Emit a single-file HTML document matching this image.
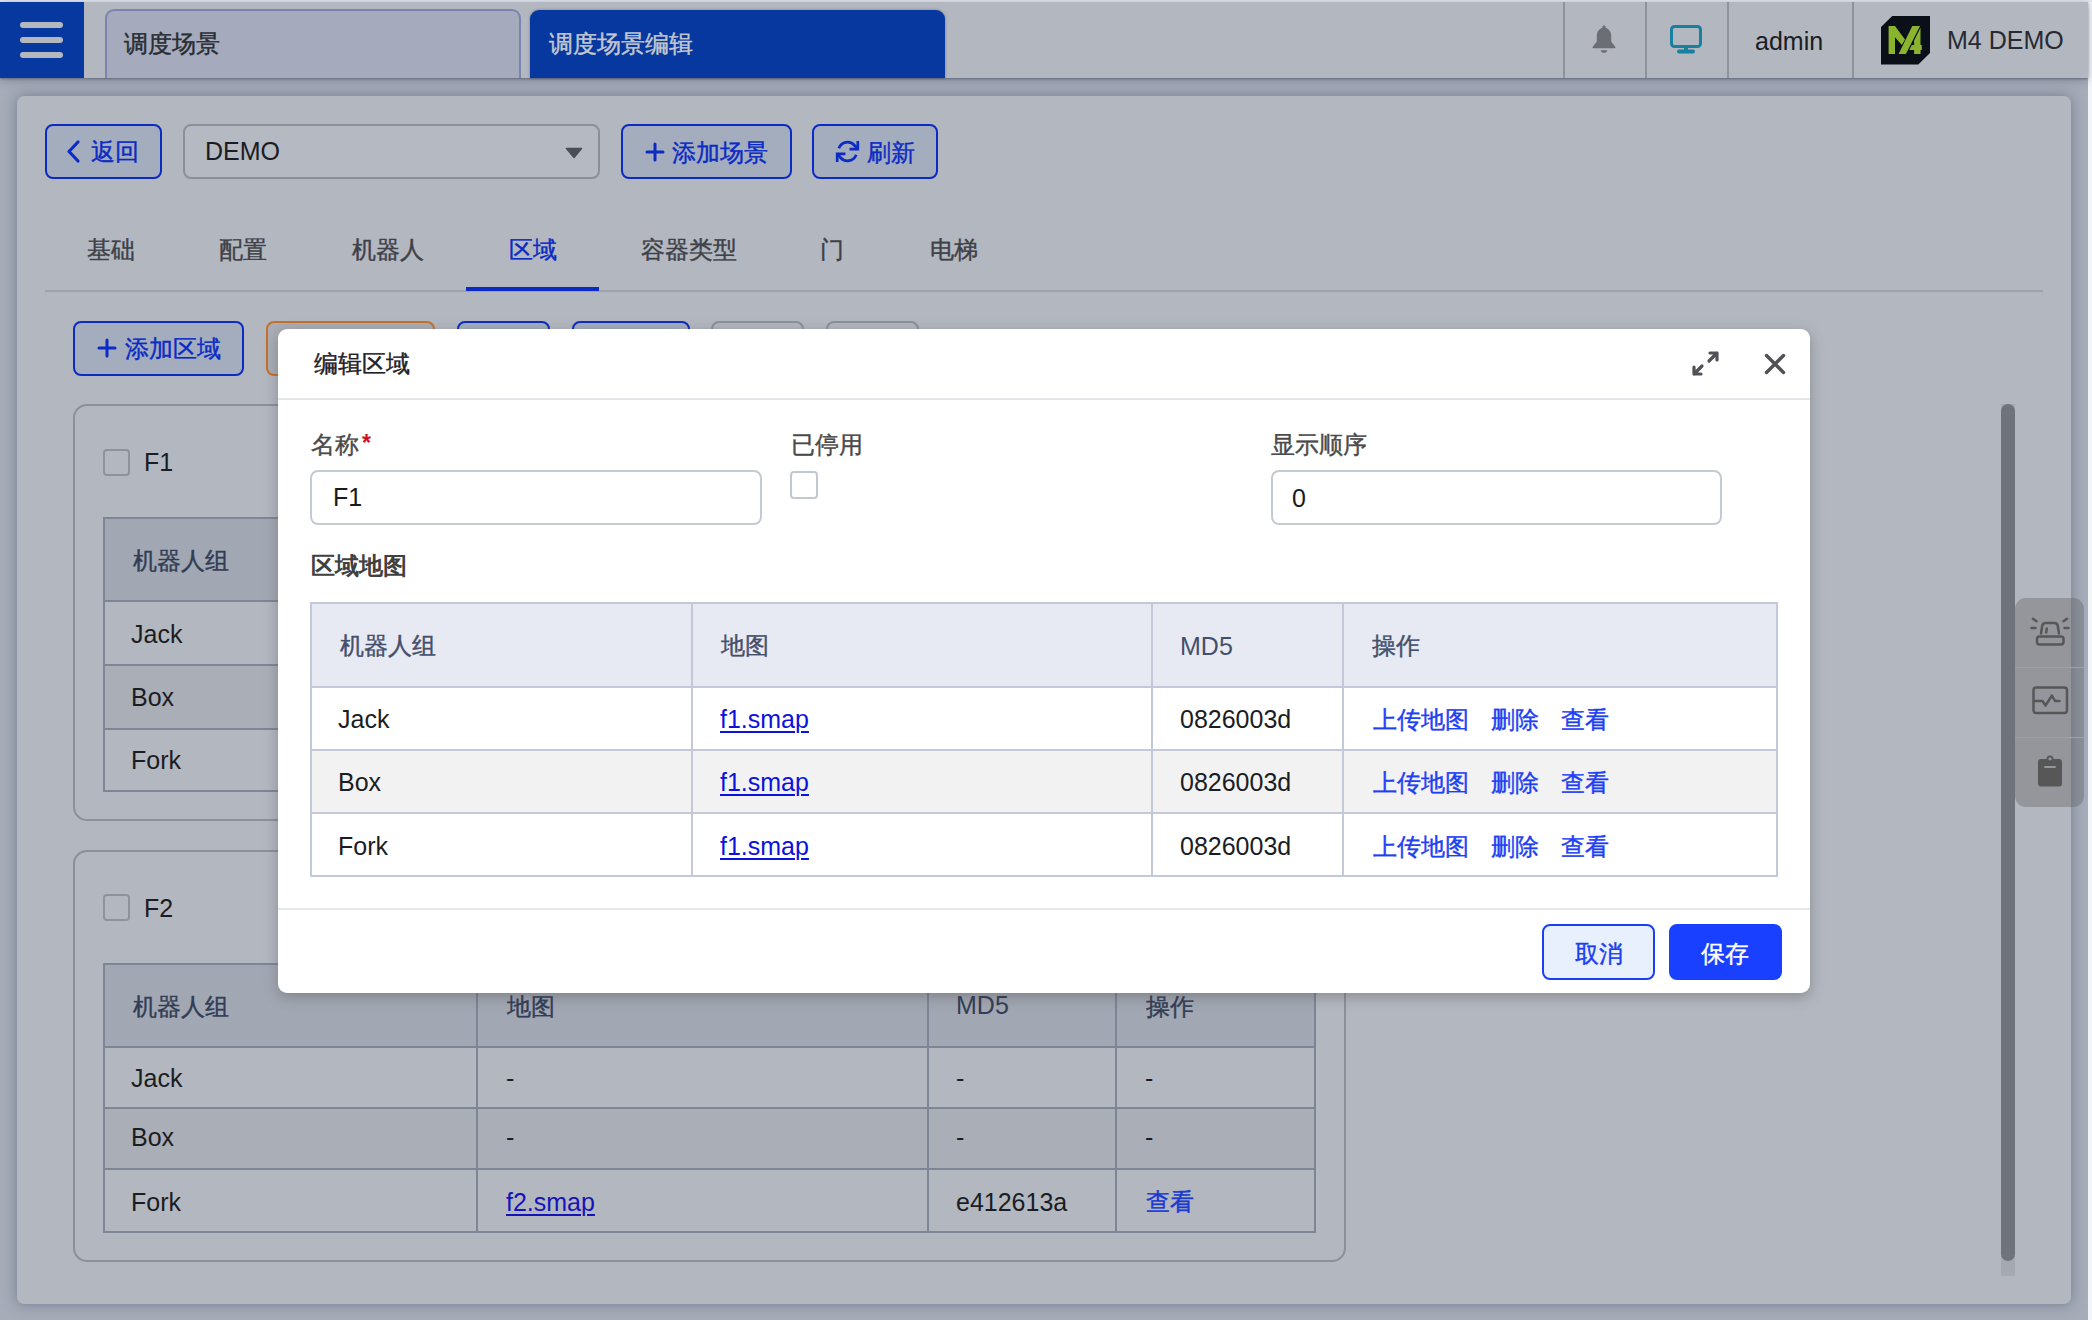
<!DOCTYPE html>
<html><head><meta charset="utf-8">
<style>
*{box-sizing:border-box;margin:0;padding:0}
html,body{width:2092px;height:1320px;overflow:hidden}
body{position:relative;background:#f4f5f9;font-family:"Liberation Sans",sans-serif;font-size:24px;color:#1a1d24}
.a{position:absolute}
.t{position:absolute;line-height:30px;white-space:nowrap;font-size:24px;-webkit-text-stroke-width:0.4px}
.t.l{-webkit-text-stroke-width:0}
.l{font-size:25px}
/* header */
#topstrip{left:0;top:0;width:2092px;height:2px;background:#e4e8f0}
#header{left:0;top:2px;width:2088px;height:76px;background:#b3b7bf;box-shadow:0 1px 2px rgba(50,60,85,.45),0 2px 9px rgba(50,60,85,.35)}
#page{left:0;top:78px;width:2088px;height:1242px;background:#a6acb8}
#burger{left:0;top:2px;width:84px;height:76px;background:#0638a0}
.bar{position:absolute;left:20px;width:43px;height:6px;border-radius:3px;background:#b3b7bf}
.htab{position:absolute;top:9px;height:69px;border-radius:9px 9px 0 0}
.sep{position:absolute;top:2px;width:2px;height:76px;background:#8e939b}
/* card */
#card{left:17px;top:96px;width:2054px;height:1208px;background:#b3b7bf;border-radius:7px;box-shadow:0 0 14px rgba(60,75,105,.5)}
.obtn{position:absolute;height:55px;border:2px solid #0b2bc4;border-radius:8px;background:#a3adbd}
.blue{color:#0b2bc4}
.zc{position:absolute;border:2px solid #8c9098;border-radius:14px}
.cb{position:absolute;width:27px;height:27px;border:2px solid #8e939b;border-radius:4px}
.tbl{position:absolute;border:2px solid #7e8595}
.hl{position:absolute;height:2px;background:#7e8595}
.vl{position:absolute;width:2px;background:#7e8595}
/* modal */
#modal{left:278px;top:329px;width:1532px;height:664px;background:#fff;border-radius:9px;box-shadow:0 4px 14px rgba(70,70,72,.38)}
.lab{color:#4a4a4a}
.inp{position:absolute;height:55px;border:2px solid #c6cad3;border-radius:8px;background:#fff}
.mhl{position:absolute;height:2px;background:#c5c8d8}
.mvl{position:absolute;width:2px;background:#c5c8d8}
.lnk{color:#0b12dd;text-decoration:underline;text-decoration-thickness:2px;text-underline-offset:3px}
.op{color:#1e40f5}
</style></head><body>
<div id="topstrip" class="a"></div>
<div id="page" class="a"></div>
<div id="header" class="a"></div>
<div id="burger" class="a">
  <div class="bar" style="top:20px"></div>
  <div class="bar" style="top:35px"></div>
  <div class="bar" style="top:50px"></div>
</div>
<div class="htab" style="left:105px;width:416px;background:#a5abbd;border:2px solid #7a84ae;border-bottom:none"></div>
<div class="t" style="left:124px;top:29px;color:#2a2d33">调度场景</div>
<div class="htab" style="left:530px;top:10px;height:68px;width:415px;background:#0638a0;box-shadow:0 0 3px rgba(20,30,80,.4)"></div>
<div class="t" style="left:549px;top:29px;color:#c3c7cf">调度场景编辑</div>

<div class="sep" style="left:1563px"></div>
<div class="sep" style="left:1645px"></div>
<div class="sep" style="left:1727px"></div>
<div class="sep" style="left:1852px"></div>
<!-- bell -->
<svg class="a" style="left:1588px;top:23px" width="32" height="32" viewBox="0 0 32 32">
  <path d="M16 2.5c1 0 1.6.7 1.6 1.6v.6c3.4 1 5.6 4.2 5.6 8.1v5.8l4.2 5.4v1.3H4.6v-1.3l4.2-5.4v-5.8c0-3.9 2.2-7.1 5.6-8.1v-.6c0-.9.6-1.6 1.6-1.6z" fill="#6b6e75"/>
  <path d="M12.6 27.2h6.8c-.5 1.6-1.8 2.6-3.4 2.6s-2.9-1-3.4-2.6z" fill="#6b6e75"/>
</svg>
<!-- monitor -->
<svg class="a" style="left:1668px;top:23px" width="36" height="32" viewBox="0 0 36 32">
  <rect x="3.5" x2="0" y="3.5" width="29" height="20" rx="3" fill="none" stroke="#1a80a0" stroke-width="3"/>
  <rect x="16" y="23" width="4" height="5" fill="#1a80a0"/>
  <rect x="9" y="26.5" width="18" height="4" rx="2" fill="#1a80a0"/>
</svg>
<div class="t l" style="left:1755px;top:26px;color:#1a1d24">admin</div>
<!-- logo -->
<svg class="a" style="left:1881px;top:16px" width="49" height="49" viewBox="0 0 49 49">
  <path d="M11.2 0H49V37L37.3 48.5H0V11Z" fill="#0a0f18"/>
  <g fill="#8bb42e">
    <path d="M7.6 10.1H14L24 23.5 20.8 29 14 21.3V38.1H7.6Z"/>
    <path d="M17.6 38.1H24.9L39 10.1H31.3Z"/>
    <path d="M39.5 11.7V29H40.8V34H39.5V38.1H33.1V34H28.3L30.8 29H33.1V24.4Z"/>
  </g>
</svg>
<div class="t l" style="left:1947px;top:25px;color:#262a33">M4 DEMO</div>

<!-- main card -->
<div id="card" class="a"></div>
<div class="obtn" style="left:45px;top:124px;width:117px"></div>
<svg class="a" style="left:64px;top:139px" width="20" height="26" viewBox="0 0 20 26"><path d="M14 3L5 12.5 14 22" fill="none" stroke="#0b2bc4" stroke-width="3.2" stroke-linecap="round" stroke-linejoin="round"/></svg>
<div class="t blue" style="left:91px;top:137px">返回</div>
<div class="a" style="left:183px;top:124px;width:417px;height:55px;border:2px solid #8a9099;border-radius:8px;background:#b5b9c1"></div>
<div class="t l" style="left:205px;top:136px;color:#1a1d24">DEMO</div>
<svg class="a" style="left:565px;top:147px" width="18" height="12" viewBox="0 0 18 12"><path d="M1.5 1.5h15L9 10.5z" fill="#4a4f57" stroke="#4a4f57" stroke-width="1.5" stroke-linejoin="round"/></svg>
<div class="obtn" style="left:621px;top:124px;width:171px"></div>
<svg class="a" style="left:643px;top:141px" width="24" height="22" viewBox="0 0 24 22"><path d="M12 3v16M4 11h16" stroke="#0b2bc4" stroke-width="3" stroke-linecap="round"/></svg>
<div class="t blue" style="left:672px;top:138px">添加场景</div>
<div class="obtn" style="left:812px;top:124px;width:126px"></div>
<svg class="a" style="left:834px;top:139px" width="27" height="26" viewBox="0 0 27 26">
  <path d="M4.8 9.3A9.3 9.3 0 0 1 20.6 6.5L23.5 9.6" fill="none" stroke="#0b2bc4" stroke-width="2.7"/>
  <path d="M23.8 3.3v6.9h-6.9" fill="none" stroke="#0b2bc4" stroke-width="2.7" stroke-linecap="square"/>
  <path d="M22.2 15.7A9.3 9.3 0 0 1 6.4 18.5L3.5 15.4" fill="none" stroke="#0b2bc4" stroke-width="2.7"/>
  <path d="M3.2 21.7v-6.9h6.9" fill="none" stroke="#0b2bc4" stroke-width="2.7" stroke-linecap="square"/>
</svg>
<div class="t blue" style="left:867px;top:138px">刷新</div>

<!-- tabs -->
<div class="t" style="left:87px;top:235px;color:#3e4148">基础</div>
<div class="t" style="left:219px;top:235px;color:#3e4148">配置</div>
<div class="t" style="left:352px;top:235px;color:#3e4148">机器人</div>
<div class="t blue" style="left:509px;top:235px">区域</div>
<div class="t" style="left:641px;top:235px;color:#3e4148">容器类型</div>
<div class="t" style="left:820px;top:235px;color:#3e4148">门</div>
<div class="t" style="left:930px;top:235px;color:#3e4148">电梯</div>
<div class="a" style="left:45px;top:290px;width:1998px;height:2px;background:#9ea3ab"></div>
<div class="a" style="left:466px;top:287px;width:133px;height:4px;background:#0b2bc4"></div>

<!-- sub toolbar -->
<div class="obtn" style="left:73px;top:321px;width:171px"></div>
<svg class="a" style="left:95px;top:337px" width="24" height="22" viewBox="0 0 24 22"><path d="M12 3v16M4 11h16" stroke="#0b2bc4" stroke-width="3" stroke-linecap="round"/></svg>
<div class="t blue" style="left:125px;top:334px">添加区域</div>
<div class="obtn" style="left:266px;top:321px;width:169px;border-color:#c8702a;background:#a9adb5"></div>
<div class="obtn" style="left:457px;top:321px;width:93px"></div>
<div class="obtn" style="left:572px;top:321px;width:118px"></div>
<div class="obtn" style="left:711px;top:321px;width:93px;border-color:#8c9199;background:#b3b7bf"></div>
<div class="obtn" style="left:826px;top:321px;width:93px;border-color:#8c9199;background:#b3b7bf"></div>

<!-- F1 card -->
<div class="zc" style="left:73px;top:404px;width:1273px;height:417px"></div>
<div class="cb" style="left:103px;top:449px"></div>
<div class="t l" style="left:144px;top:447px">F1</div>
<div class="a" style="left:103px;top:517px;width:1213px;height:84px;background:#a2a8b3"></div>
<div class="a" style="left:103px;top:665px;width:1213px;height:64px;background:#aaaeb6"></div>
<div class="tbl" style="left:103px;top:517px;width:1213px;height:275px"></div>
<div class="hl" style="left:103px;top:600px;width:1213px"></div>
<div class="hl" style="left:103px;top:664px;width:1213px"></div>
<div class="hl" style="left:103px;top:728px;width:1213px"></div>
<div class="vl" style="left:476px;top:517px;height:275px"></div>
<div class="t" style="left:133px;top:546px;color:#333d55">机器人组</div>
<div class="t l" style="left:131px;top:619px">Jack</div>
<div class="t l" style="left:131px;top:682px">Box</div>
<div class="t l" style="left:131px;top:745px">Fork</div>

<!-- F2 card -->
<div class="zc" style="left:73px;top:850px;width:1273px;height:412px"></div>
<div class="cb" style="left:103px;top:894px"></div>
<div class="t l" style="left:144px;top:893px">F2</div>
<div class="a" style="left:103px;top:963px;width:1213px;height:84px;background:#a2a8b3"></div>
<div class="a" style="left:103px;top:1108px;width:1213px;height:61px;background:#aaaeb6"></div>
<div class="tbl" style="left:103px;top:963px;width:1213px;height:270px"></div>
<div class="hl" style="left:103px;top:1046px;width:1213px"></div>
<div class="hl" style="left:103px;top:1107px;width:1213px"></div>
<div class="hl" style="left:103px;top:1168px;width:1213px"></div>
<div class="vl" style="left:476px;top:963px;height:270px"></div>
<div class="vl" style="left:927px;top:963px;height:270px"></div>
<div class="vl" style="left:1115px;top:963px;height:270px"></div>
<div class="t" style="left:133px;top:992px;color:#333d55">机器人组</div>
<div class="t" style="left:507px;top:992px;color:#333d55">地图</div>
<div class="t l" style="left:956px;top:990px;color:#333d55">MD5</div>
<div class="t" style="left:1146px;top:992px;color:#333d55">操作</div>
<div class="t l" style="left:131px;top:1063px">Jack</div>
<div class="t l" style="left:506px;top:1063px">-</div>
<div class="t l" style="left:956px;top:1063px">-</div>
<div class="t l" style="left:1145px;top:1063px">-</div>
<div class="t l" style="left:131px;top:1122px">Box</div>
<div class="t l" style="left:506px;top:1122px">-</div>
<div class="t l" style="left:956px;top:1122px">-</div>
<div class="t l" style="left:1145px;top:1122px">-</div>
<div class="t l" style="left:131px;top:1187px">Fork</div>
<div class="t l lnk" style="left:506px;top:1187px;color:#1414b8">f2.smap</div>
<div class="t l" style="left:956px;top:1187px">e412613a</div>
<div class="t" style="left:1146px;top:1187px;color:#1a3ad0">查看</div>

<!-- scrollbar -->
<div class="a" style="left:2001px;top:404px;width:14px;height:872px;background:#a4a9b2"></div>
<div class="a" style="left:2001px;top:404px;width:14px;height:857px;border-radius:7px;background:#6f737c"></div>
<!-- floating panel -->
<div class="a" style="left:2015px;top:598px;width:69px;height:209px;border-radius:11px;background:rgba(85,85,85,.33)"></div>
<svg class="a" style="left:2028px;top:614px" width="44" height="34" viewBox="0 0 44 34">
  <g fill="none" stroke="#575757" stroke-width="2.5" stroke-linecap="round" stroke-linejoin="round">
    <path d="M13 19.5l1.2-7.5a3.5 3.5 0 0 1 3.5-3h8.6a3.5 3.5 0 0 1 3.5 3l1.2 7.5"/>
    <path d="M18.8 14.5l-.6 4"/>
    <rect x="9" y="22.5" width="26.5" height="8" rx="2.4"/>
    <path d="M3.5 14h4M36.5 14h4M5 4.8l3.5 2.4M39 4.8l-3.5 2.4"/>
  </g>
</svg>
<svg class="a" style="left:2030px;top:684px" width="40" height="33" viewBox="0 0 40 33">
  <g fill="none" stroke="#575757" stroke-width="2.5" stroke-linecap="round" stroke-linejoin="round">
    <rect x="3.5" y="3.5" width="33.5" height="25.5" rx="2.8"/>
    <path d="M4 17h8.5l3 4.5 6.5-10 3 5.5h4.5"/>
  </g>
</svg>
<svg class="a" style="left:2034px;top:752px" width="32" height="36" viewBox="0 0 32 36">
  <path d="M7 7h5.5a3.5 3.5 0 0 1 7 0H25a3 3 0 0 1 3 3v21.5a3 3 0 0 1-3 3H7a3 3 0 0 1-3-3V10a3 3 0 0 1 3-3z" fill="#575757"/>
  <circle cx="16" cy="6.8" r="1.6" fill="#94979c"/>
  <path d="M11 15h10" stroke="#94979c" stroke-width="1.8" stroke-linecap="round"/>
</svg>
<div class="a" style="left:2015px;top:667px;width:69px;height:1px;background:#9ea1a4"></div>
<div class="a" style="left:2015px;top:737px;width:69px;height:1px;background:#9ea1a4"></div>

<!-- modal -->
<div id="modal" class="a"></div>

<div class="t" style="left:314px;top:349px;color:#1f2228">编辑区域</div>
<svg class="a" style="left:1690px;top:348px" width="31" height="31" viewBox="0 0 31 31">
  <path d="M20 5h7v7M27 5l-8 8M11 26H4v-7M4 26l8-8" fill="none" stroke="#505255" stroke-width="3.2" stroke-linecap="round" stroke-linejoin="round"/>
</svg>
<svg class="a" style="left:1762px;top:351px" width="26" height="26" viewBox="0 0 26 26">
  <path d="M4.5 4.5l17 17M21.5 4.5l-17 17" fill="none" stroke="#505255" stroke-width="3.4" stroke-linecap="round"/>
</svg>
<div class="a" style="left:278px;top:398px;width:1532px;height:2px;background:#e4e6ea"></div>
<div class="t lab" style="left:311px;top:430px">名称</div>
<div class="t" style="left:362px;top:428px;color:#d0101e;font-weight:bold;font-size:23px;-webkit-text-stroke-width:0">*</div>
<div class="t lab" style="left:791px;top:430px">已停用</div>
<div class="t lab" style="left:1271px;top:430px">显示顺序</div>
<div class="inp" style="left:310px;top:470px;width:452px"></div>
<div class="t l" style="left:333px;top:482px;color:#1a1a1a">F1</div>
<div class="a" style="left:790px;top:471px;width:28px;height:28px;border:2px solid #c3c7cf;border-radius:4px"></div>
<div class="inp" style="left:1271px;top:470px;width:451px"></div>
<div class="t l" style="left:1292px;top:483px;color:#1a1a1a">0</div>
<div class="t" style="left:311px;top:551px;color:#404040;font-weight:bold;-webkit-text-stroke-width:0">区域地图</div>

<div class="a" style="left:310px;top:602px;width:1468px;height:86px;background:#e8eaf3"></div>
<div class="a" style="left:310px;top:750px;width:1468px;height:63px;background:#f2f2f2"></div>
<div class="mhl" style="left:310px;top:602px;width:1468px"></div>
<div class="mhl" style="left:310px;top:686px;width:1468px"></div>
<div class="mhl" style="left:310px;top:749px;width:1468px"></div>
<div class="mhl" style="left:310px;top:812px;width:1468px"></div>
<div class="mhl" style="left:310px;top:875px;width:1468px"></div>
<div class="mvl" style="left:310px;top:602px;height:275px"></div>
<div class="mvl" style="left:691px;top:602px;height:275px"></div>
<div class="mvl" style="left:1151px;top:602px;height:275px"></div>
<div class="mvl" style="left:1342px;top:602px;height:275px"></div>
<div class="mvl" style="left:1776px;top:602px;height:275px"></div>

<div class="t" style="left:340px;top:631px;color:#44506b">机器人组</div>
<div class="t" style="left:721px;top:631px;color:#44506b">地图</div>
<div class="t l" style="left:1180px;top:631px;color:#44506b">MD5</div>
<div class="t" style="left:1372px;top:631px;color:#44506b">操作</div>

<div class="t l" style="left:338px;top:704px">Jack</div>
<div class="t l lnk" style="left:720px;top:704px">f1.smap</div>
<div class="t l" style="left:1180px;top:704px">0826003d</div>
<div class="t op" style="left:1373px;top:705px">上传地图</div>
<div class="t op" style="left:1491px;top:705px">删除</div>
<div class="t op" style="left:1561px;top:705px">查看</div>

<div class="t l" style="left:338px;top:767px">Box</div>
<div class="t l lnk" style="left:720px;top:767px">f1.smap</div>
<div class="t l" style="left:1180px;top:767px">0826003d</div>
<div class="t op" style="left:1373px;top:768px">上传地图</div>
<div class="t op" style="left:1491px;top:768px">删除</div>
<div class="t op" style="left:1561px;top:768px">查看</div>

<div class="t l" style="left:338px;top:831px">Fork</div>
<div class="t l lnk" style="left:720px;top:831px">f1.smap</div>
<div class="t l" style="left:1180px;top:831px">0826003d</div>
<div class="t op" style="left:1373px;top:832px">上传地图</div>
<div class="t op" style="left:1491px;top:832px">删除</div>
<div class="t op" style="left:1561px;top:832px">查看</div>

<div class="a" style="left:278px;top:908px;width:1532px;height:2px;background:#e4e7ee"></div>
<div class="a" style="left:1542px;top:924px;width:113px;height:56px;border:2px solid #1a40f5;border-radius:8px;background:#e8f0fd"></div>
<div class="t" style="left:1575px;top:939px;color:#1a3ff0">取消</div>
<div class="a" style="left:1669px;top:924px;width:113px;height:56px;border-radius:8px;background:#1a40ff"></div>
<div class="t" style="left:1701px;top:939px;color:#fff">保存</div>
</body></html>
